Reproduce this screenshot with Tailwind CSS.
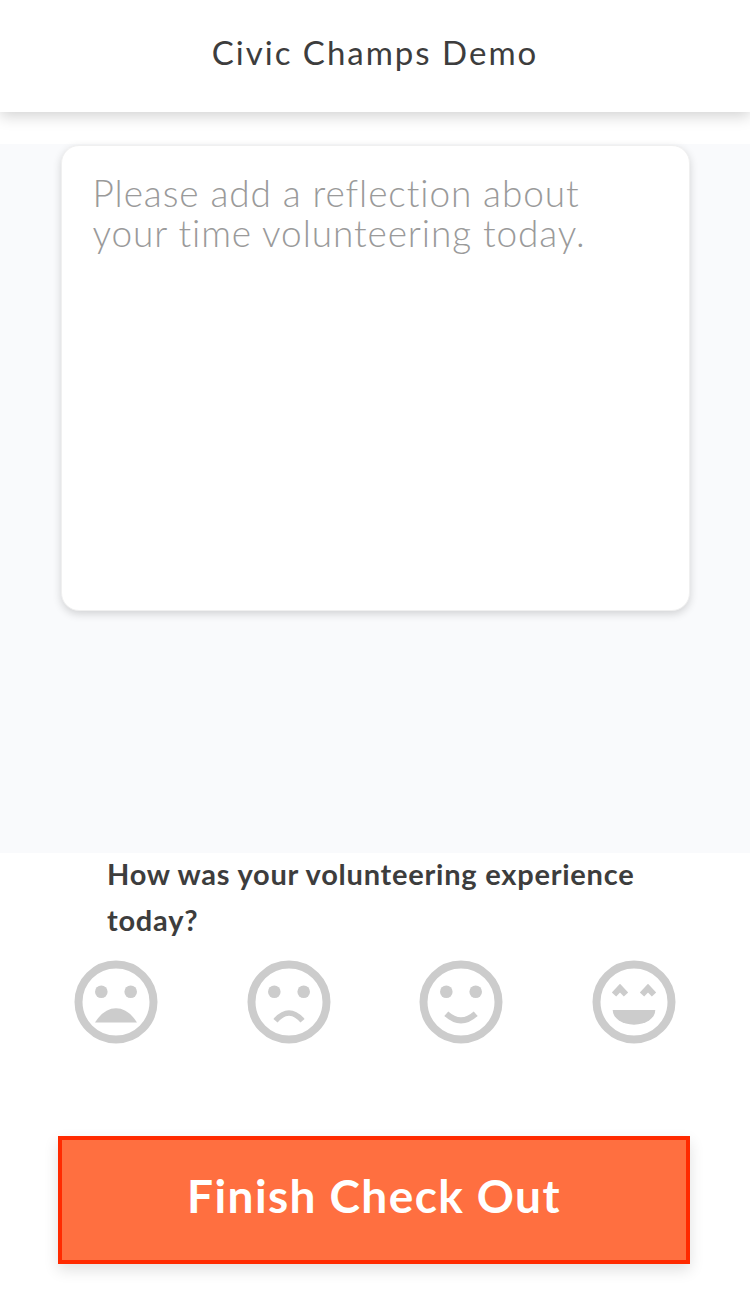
<!DOCTYPE html>
<html lang="en">
<head>
  <meta charset="UTF-8" />
  <meta name="viewport" content="width=device-width, initial-scale=1.0" />
  <title>Civic Champs Demo</title>
  <script src="https://cdn.jsdelivr.net/npm/@tailwindcss/browser@4"></script>
</head>
<body class="bg-white h-[1294px] overflow-hidden flex flex-col font-['Lato',sans-serif]">
  <!-- Header -->
  <header class="relative z-10 bg-white h-[112px] shrink-0 flex items-center justify-center shadow-[0_4px_14px_rgba(0,0,0,0.18)]">
    <h1 class="text-[33px] leading-none text-[#3d3d3d] tracking-[2px] -mt-[8px]">Civic Champs Demo</h1>
  </header>

  <main class="mt-[32px] h-[709px] shrink-0 bg-[#f9fafc] pt-[1px] flex justify-center">
    <textarea class="w-[629px] h-[466px] bg-white rounded-[18px] border border-[#f0f0f0] shadow-[0_3px_8px_rgba(0,0,0,0.16)] px-[31px] pt-[27px] pb-[25px] text-[37px] leading-[40px] font-light tracking-[0.9px] text-[#3d3d3d] placeholder:text-[#9a9a9a] placeholder:opacity-100 resize-none outline-none" placeholder="Please add a reflection about your time volunteering today."></textarea>
  </main>

  <!-- Rating -->
  <section class="flex flex-col">
    <p class="-mt-[2px] pl-[107px] pr-[100px] text-[29px] leading-[46px] font-bold tracking-[0.76px] text-[#3d3d3d]">How was your volunteering experience today?</p>
    <div class="mt-[9px] px-[30px] flex justify-around">
      <svg class="w-[100px] h-[100px]" viewBox="-50 -50 100 100" fill="#cccccc">
        <circle cx="0" cy="0" r="37.5" fill="none" stroke="#cccccc" stroke-width="8" />
        <circle cx="-14.7" cy="-10.3" r="6.3" />
        <circle cx="14.7" cy="-10.3" r="6.3" />
        <path d="M-21 20.5 Q-12 6.3 0 6.3 Q12 6.3 21 20.5 Z" />
      </svg>
      <svg class="w-[100px] h-[100px]" viewBox="-50 -50 100 100" fill="#cccccc">
        <circle cx="0" cy="0" r="37.5" fill="none" stroke="#cccccc" stroke-width="8" />
        <circle cx="-14.7" cy="-10.3" r="6.3" />
        <circle cx="14.7" cy="-10.3" r="6.3" />
        <path d="M-13.5 18.7 Q0 3.3 13.5 18.7" fill="none" stroke="#cccccc" stroke-width="5.5" />
      </svg>
      <svg class="w-[100px] h-[100px]" viewBox="-50 -50 100 100" fill="#cccccc">
        <circle cx="0" cy="0" r="37.5" fill="none" stroke="#cccccc" stroke-width="8" />
        <circle cx="-14.7" cy="-10.3" r="6.3" />
        <circle cx="14.7" cy="-10.3" r="6.3" />
        <path d="M-14.7 11.7 Q0 25 14.7 11.7" fill="none" stroke="#cccccc" stroke-width="6" />
      </svg>
      <svg class="w-[100px] h-[100px]" viewBox="-50 -50 100 100" fill="#cccccc">
        <circle cx="0" cy="0" r="37.5" fill="none" stroke="#cccccc" stroke-width="8" />
        <path d="M-20 -7.5 L-14 -13.8 L-8 -7.5 M8 -7.5 L14 -13.8 L20 -7.5" fill="none" stroke="#cccccc" stroke-width="6" />
        <path d="M-21.3 8 H21.3 A21.3 14.7 0 0 1 -21.3 8 Z" />
      </svg>
    </div>
  </section>

  <div class="mt-[84px] pl-[58px]">
    <button class="w-[632px] h-[128px] pb-[10px] bg-[#ff6f40] border-[4px] border-[#ff2a00] text-white text-[46px] font-bold tracking-[1.4px] shadow-[0_6px_14px_rgba(0,0,0,0.12)]">Finish Check Out</button>
  </div>
</body>
</html>
